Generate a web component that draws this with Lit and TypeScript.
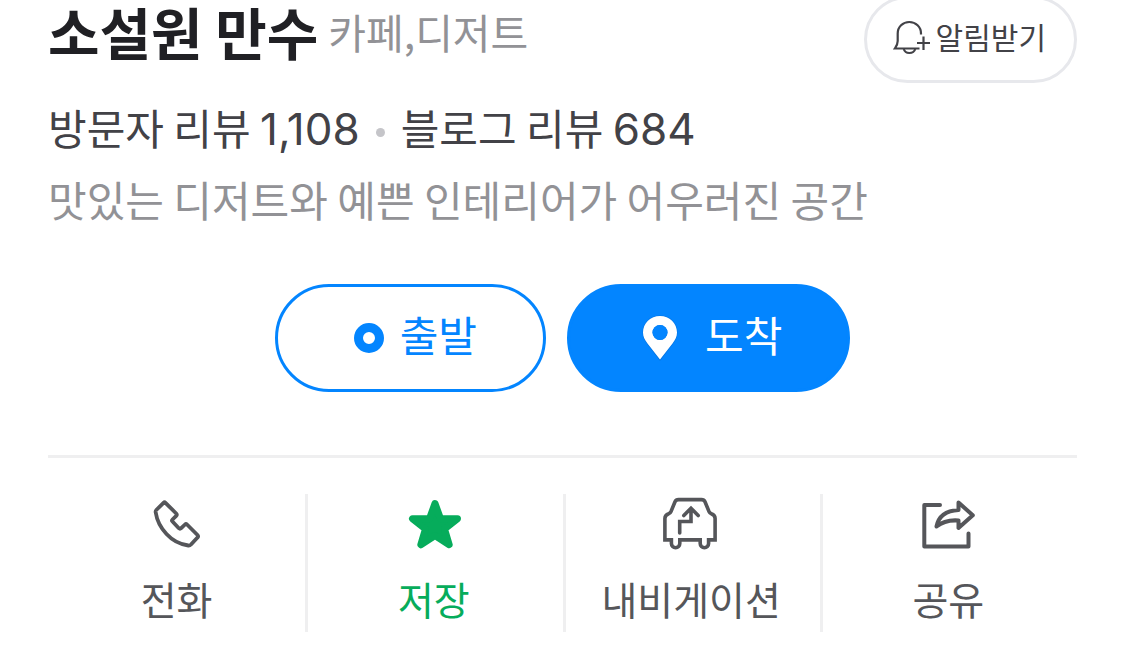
import { LitElement, html, css, svg } from "lit";
import { customElement } from "lit/decorators.js";

const bell = svg`<svg class="bell" viewBox="0 0 38 36" width="38" height="36" fill="none" stroke="currentColor" stroke-width="2.200" aria-hidden="true">
  <path d="M28 14.5V13.5C28 6.8 22.8 2 16.3 2S4.7 6.8 4.7 13.5V21C4.7 24.5 3.5 26 1.8 28.5H26.5"/>
  <path d="M10.8 29C11.5 31.5 13.6 33 16.3 33S21.500 31.5 22.200 29"/>
  <path d="M24 23H37M30.500 16.500V30"/>
</svg>`;

const startDot = svg`<svg viewBox="0 0 30 30" width="30" height="30" aria-hidden="true">
  <circle cx="15" cy="15" r="10.500" fill="none" stroke="currentColor" stroke-width="9"/>
</svg>`;

const pin = svg`<svg viewBox="0 0 36 46" width="36" height="46" aria-hidden="true">
  <path fill="#0475e4" d="M18 .5C8 .5.5 8 .5 17.500C.5 22 2.500 25.500 5 29L18 46L31 29C33.500 25.500 35.500 22 35.500 17.500C35.500 8 28 .5 18 .5Z"/>
  <path fill="currentColor" fill-rule="evenodd" d="M18 1C8.500 1 1 8.300 1 17.500C1 21.500 2.800 25 5.500 28.500L18 44.500L30.500 28.500C33.200 25 35 21.500 35 17.500C35 8.300 27.500 1 18 1ZM18 10A7.500 7.500 0 1 1 18 25A7.500 7.500 0 1 1 18 10Z"/>
  <circle cx="18" cy="17.500" r="7.500" fill="#0385ff"/>
</svg>`;

const phone = svg`<svg viewBox="-1 -1 56 56" width="56" height="56" fill="none" stroke="currentColor" stroke-width="3.800" stroke-linejoin="round" aria-hidden="true">
  <path d="M6.300 13L13.500 5.800Q14.500 4.800 15.500 5.800L26.200 16.500Q27.300 17.700 26.200 18.800L22.500 22.500Q21.500 23.500 22.500 24.500L28.800 31.200Q30 32.300 31.200 31.200L35 27.500Q36 26.500 37 27.500L47.500 38Q48.800 39.300 47.500 40.500L41 47.500Q39.800 48.700 38.300 48.500Q25.500 46.800 16.500 37Q7.500 27.500 5.600 15Q5.500 13.800 6.300 13Z"/>
</svg>`;

const star = svg`<svg viewBox="-1 0 56 56" width="56" height="56" aria-hidden="true">
  <path fill="currentColor" stroke="currentColor" stroke-width="7" stroke-linejoin="round" d="M28 7.500L33.500 22.700H50.500L37.500 33L42.200 48.700L28 39.500L13.800 48.700L18.500 33L5.500 22.700H22.500Z"/>
</svg>`;

const car = svg`<svg viewBox="0 0 56 56" width="56" height="56" fill="none" stroke="currentColor" stroke-width="3.600" aria-hidden="true">
  <path d="M8.400 43.900H1.900V22.500Q1.900 19 5.700 17.800Q7.200 17.300 8 15.500L12 5.800Q13 3.600 15.500 3.600H38.500Q41 3.600 42 5.800L46 15.500Q46.800 17.300 48.300 17.800Q52.100 19 52.100 22.500V43.900H45.600V47.500A4.200 4.200 0 0 1 37.200 47.500V43.900H16.800V47.500A4.200 4.200 0 0 1 8.400 47.500Z"/>
  <path stroke-linecap="round" d="M16.700 37V25.500H28V12.500M20.800 19.500L28 12.200L35.200 19.500"/>
</svg>`;

const share = svg`<svg viewBox="0 0 56 56" width="56" height="56" fill="none" stroke="currentColor" stroke-width="4" stroke-linecap="round" stroke-linejoin="round" aria-hidden="true">
  <path d="M20 9H4.300V50.500H48.500V37.500"/>
  <path d="M38.500 6.500L52.800 19.300L38.500 32V24.500Q25 23.500 16.500 30.500Q19.500 15 38.500 14Z"/>
</svg>`;

@customElement("app-root")
export class AppRoot extends LitElement {
  static styles = css`
    :host {
      display: block;
      background: #fff;
      color: #424247;
      font-family: "Noto Sans CJK KR", sans-serif;
    }
    .place {
      margin: 0 48px;
    }
    .head {
      display: flex;
      justify-content: space-between;
      align-items: flex-start;
    }
    .names {
      display: flex;
      align-items: flex-start;
      gap: 10px;
    }
    h1, p {
      margin: 0;
    }
    h1 {
      font-size: 56px;
      line-height: 62px;
      font-weight: 700;
      color: #202024;
    }
    .category {
      font-size: 41px;
      line-height: 62px;
      color: #929296;
    }
    button {
      font: inherit;
      cursor: pointer;
      box-sizing: border-box;
      display: flex;
      align-items: center;
      justify-content: center;
      padding: 0;
      background: #fff;
    }
    .notify {
      height: 87px;
      margin-top: -4px;
      padding: 0 28px 4px 26px;
      gap: 5px;
      font-size: 30px;
      color: #424247;
      border: 3px solid #e7e8ec;
      border-radius: 44px;
    }
    .notify span {
      padding-bottom: 4px;
    }
    .reviews {
      display: flex;
      align-items: center;
      margin-top: 10px;
      font-size: 42px;
      line-height: 68px;
    }
    .reviews a {
      color: inherit;
      text-decoration: none;
    }
    .num {
      font-family: Inter, sans-serif;
      font-size: 44px;
    }
    .sep {
      width: 9px;
      height: 9px;
      margin: 8px 16px 0;
      border-radius: 50%;
      background: #c5c5c9;
    }
    .intro {
      font-size: 42px;
      line-height: 72px;
      color: #929296;
    }
    .route {
      display: flex;
      justify-content: center;
      gap: 21px;
      margin-top: 49px;
    }
    .route button {
      height: 108px;
      padding: 0 66px 0 76px;
      gap: 16px;
      font-size: 42px;
      color: #0385ff;
      border: 3px solid #0385ff;
      border-radius: 54px;
    }
    .route .arrive {
      padding: 0 65px 0 72px;
      gap: 27px;
      color: #fff;
      background: #0385ff;
    }
    .route span {
      padding-bottom: 10px;
    }
    .actions {
      display: grid;
      grid-template-columns: repeat(4, 1fr);
      margin-top: 63px;
      padding-top: 36px;
      border-top: 3px solid #efeff0;
    }
    .actions button {
      flex-direction: column;
      justify-content: flex-start;
      height: 138px;
      padding-top: 2px;
      gap: 18px;
      font-size: 39px;
      line-height: 56px;
      color: #55565a;
      border: 0;
    }
    .actions button + button {
      box-shadow: inset 3px 0 #efeff0;
    }
    .actions .saved {
      color: #06ac5b;
    }
    svg {
      display: block;
      flex: none;
    }
  `;

  render() {
    return html`
      <main class="place">
        <header class="head">
          <div class="names">
            <h1>소설원 만수</h1>
            <span class="category">카페,디저트</span>
          </div>
          <button class="notify" type="button">${bell}<span>알림받기</span></button>
        </header>
        <div class="reviews">
          <a href="#visitor">방문자 리뷰 <span class="num">1,108</span></a>
          <span class="sep"></span>
          <a href="#blog">블로그 리뷰 <span class="num">684</span></a>
        </div>
        <p class="intro">맛있는 디저트와 예쁜 인테리어가 어우러진 공간</p>
        <div class="route">
          <button type="button">${startDot}<span>출발</span></button>
          <button class="arrive" type="button">${pin}<span>도착</span></button>
        </div>
        <nav class="actions">
          <button type="button">${phone}<span>전화</span></button>
          <button class="saved" type="button">${star}<span>저장</span></button>
          <button type="button">${car}<span>내비게이션</span></button>
          <button type="button">${share}<span>공유</span></button>
        </nav>
      </main>
    `;
  }
}
